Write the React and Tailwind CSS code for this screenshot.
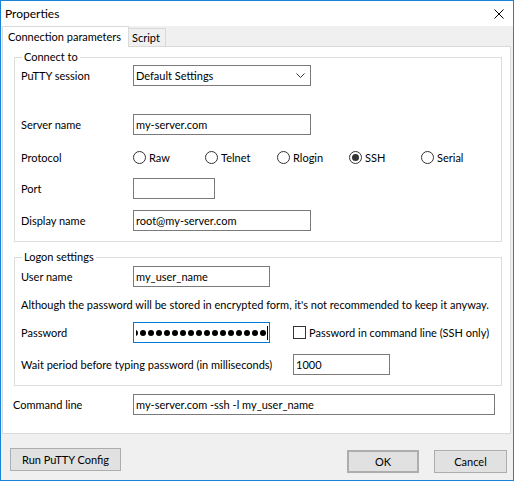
import React from 'react';

const FONT = { fontFamily: 'Lato, "Liberation Sans", sans-serif' };

function TextBox({ width, value, focused, children }) {
  return (
    <div
      className={`h-[21px] ${width} border bg-white flex items-center pl-[2px] overflow-hidden whitespace-nowrap ${
        focused ? 'border-[#0078d7]' : 'border-[#7a7a7a]'
      }`}
    >
      {children || value}
    </div>
  );
}

function Radio({ label, checked }) {
  return (
    <div className="w-[72px] flex items-center">
      <span className="w-[13px] h-[13px] rounded-full border border-[#333] bg-white flex items-center justify-center">
        {checked && <span className="w-[7px] h-[7px] rounded-full bg-[#333]" />}
      </span>
      <span className="ml-[3px]">{label}</span>
    </div>
  );
}

function Row({ label, labelWidth = 'w-[112px]', className = '', children }) {
  return (
    <div className={`h-[21px] flex items-center ${className}`}>
      <div className={`${labelWidth} shrink-0 whitespace-nowrap`}>{label}</div>
      {children}
    </div>
  );
}

function Group({ title, className = '', children }) {
  return (
    <div className={`relative ml-[11px] w-[488px] border border-[#dcdcdc] pl-[6px] pb-[10px] ${className}`}>
      <div className="absolute -top-[9px] left-[7px] bg-white px-[2px] leading-[16px] whitespace-nowrap">{title}</div>
      {children}
    </div>
  );
}

function Button({ children, className = '' }) {
  return (
    <div className={`h-[23px] flex items-center justify-center bg-[#e1e1e1] border border-[#adadad] whitespace-nowrap ${className}`}>
      {children}
    </div>
  );
}

export default function App() {
  const dots = Array.from({ length: 20 });
  return (
    <div
      className="w-[514px] h-[481px] border border-[#1883d7] bg-[#f0f0f0] flex flex-col text-[11px] text-black leading-[16px] overflow-hidden"
      style={FONT}
    >
      {/* title bar */}
      <div className="h-[25px] shrink-0 bg-white flex items-center justify-between pl-[4px] pr-[9px] text-[12px]">
        <span>Properties</span>
        <svg width="10" height="10" viewBox="0 0 10 10" className="mt-[1px]">
          <path d="M0.5 0.5 L9.5 9.5 M9.5 0.5 L0.5 9.5" stroke="#000" strokeWidth="1" fill="none" />
        </svg>
      </div>

      {/* tabs */}
      <div className="ml-[1px] mr-[2px] flex flex-col">
        <div className="h-[20px] flex items-end">
          <div className="relative z-10 h-[21px] w-[127px] -mb-px bg-white border-l border-t border-r border-[#d9d9d9] flex items-center pl-[5px] whitespace-nowrap">
            Connection parameters
          </div>
          <div className="h-[18px] w-[37px] bg-[#f0f0f0] border-t border-r border-[#d9d9d9] flex items-center pl-[3px] pt-[1px]">
            Script
          </div>
        </div>

        <div className="bg-white border border-[#d9d9d9] pb-[18px]">
          <Group title="Connect to" className="mt-[10px] pt-[7px]">
            <Row label="PuTTY session">
              <div className="h-[21px] w-[178px] border border-[#7a7a7a] bg-white flex items-center justify-between pl-[2px] pr-[5px]">
                <span>Default Settings</span>
                <svg width="9" height="5" viewBox="0 0 9 5">
                  <path d="M0.5 0.5 L4.5 4.5 L8.5 0.5" stroke="#333" strokeWidth="1" fill="none" />
                </svg>
              </div>
            </Row>
            <Row label="Server name" className="mt-[28px]">
              <TextBox width="w-[178px]" value="my-server.com" />
            </Row>
            <Row label="Protocol" className="mt-[12px]">
              <Radio label="Raw" />
              <Radio label="Telnet" />
              <Radio label="Rlogin" />
              <Radio label="SSH" checked />
              <Radio label="Serial" />
            </Row>
            <Row label="Port" className="mt-[10px]">
              <TextBox width="w-[82px]" value="" />
            </Row>
            <Row label="Display name" className="mt-[11px]">
              <TextBox width="w-[178px]" value="root@my-server.com" />
            </Row>
          </Group>

          <Group title="Logon settings" className="mt-[15px] pt-[8px]">
            <Row label="User name">
              <TextBox width="w-[137px]" value="my_user_name" />
            </Row>
            <div className="h-[21px] mt-[7px] flex items-center whitespace-nowrap">
              Although the password will be stored in encrypted form, it's not recommended to keep it anyway.
            </div>
            <Row label="Password" className="mt-[7px]">
              <TextBox width="w-[137px]" focused>
                <div className="flex-1 h-full flex items-center justify-end overflow-hidden pr-[1px]">
                  <div className="flex items-center gap-[2px] shrink-0">
                    {dots.map((_, i) => (
                      <span key={i} className="w-[6px] h-[6px] rounded-full bg-black shrink-0" />
                    ))}
                  </div>
                  <span className="w-px h-[14px] bg-black ml-[1px] shrink-0" />
                </div>
              </TextBox>
              <span className="ml-[23px] w-[13px] h-[13px] border border-[#333] bg-white shrink-0" />
              <span className="ml-[3px] whitespace-nowrap">Password in command line (SSH only)</span>
            </Row>
            <Row label="Wait period before typing password (in milliseconds)" labelWidth="w-[272px]" className="mt-[11px]">
              <TextBox width="w-[97px]" value="1000" />
            </Row>
          </Group>

          <div className="pl-[10px] mt-[8px]">
            <Row label="Command line" labelWidth="w-[120px]">
              <TextBox width="w-[362px]" value="my-server.com -ssh -l my_user_name" />
            </Row>
          </div>
        </div>
      </div>

      {/* footer buttons */}
      <div className="flex-1 flex items-start pt-[14px] pl-[9px] pr-[6px]">
        <Button className="w-[111px]">Run PuTTY Config</Button>
        <div className="flex-1" />
        <Button className="w-[72px] mt-[2px] border-2 border-[#0078d7]">OK</Button>
        <Button className="w-[73px] mt-[2px] ml-[15px]">Cancel</Button>
      </div>
    </div>
  );
}
